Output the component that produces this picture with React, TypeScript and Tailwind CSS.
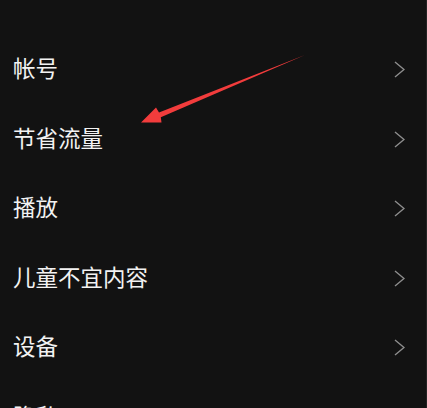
const items = ["帐号", "节省流量", "播放", "儿童不宜内容", "设备", "隐私"];

const Chevron = () => (
  <svg width="11" height="17" viewBox="0 0 11 17" fill="none">
    <polyline points="1,1 10,8.5 1,16" stroke="#8e8e8e" strokeWidth="1.4" />
  </svg>
);

export default function App() {
  return (
    <div className="relative h-[408px] w-[427px] overflow-hidden border-r border-[#232323] bg-[#121212] pt-[32.5px] font-['Noto_Sans_CJK_SC',sans-serif]">
      {items.map((label) => (
        <div key={label} className="flex h-[69.5px] items-center justify-between pl-[13px] pr-[21px]">
          <span className="text-[22.5px] leading-none text-[#f2f2f2]">{label}</span>
          <span className="mt-[5px]">
            <Chevron />
          </span>
        </div>
      ))}

      {/* annotation arrow */}
      <svg className="pointer-events-none absolute left-0 top-0" width="427" height="408">
        <polygon
          points="305,55 159,112.5 156,107.5 141,122.5 161.5,122.5 160.8,117.2"
          fill="#f23c3c"
        />
      </svg>
    </div>
  );
}
